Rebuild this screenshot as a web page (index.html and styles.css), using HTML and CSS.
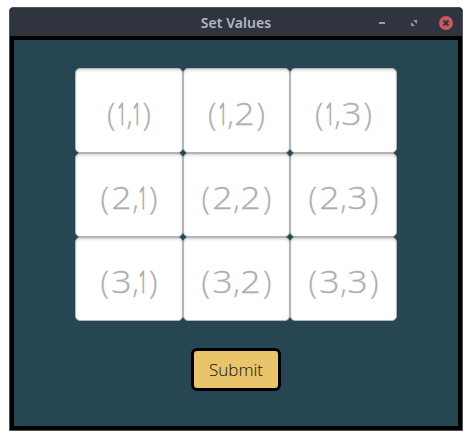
FILE: index.html
```
<!DOCTYPE html>
<html lang="en">
<head>
<meta charset="utf-8">
<title>Set Values</title>
<link rel="stylesheet" href="styles.css">
</head>
<body>
<main class="window">
  <header class="titlebar">
    <h1>Set Values</h1>
    <div class="controls">
      <svg width="80" height="16" viewBox="0 0 80 16">
        <path d="M4 7h6v2H4z" fill="#969aaa"/>
        <path d="M38 5h4v4zM36 7v4h4z" fill="#969aaa"/>
        <circle cx="71" cy="8" r="7" fill="#cc575d"/>
        <path d="M68.5 5.5l5 5m0-5l-5 5" stroke="#2f343f" stroke-width="2"/>
      </svg>
    </div>
  </header>
  <form class="content">
    <div class="grid">
      <div class="cell"><i class="p">(</i><i class="one">1</i><i class="c">,</i><i class="one">1</i><i class="p">)</i></div>
      <div class="cell"><i class="p">(</i><i class="one">1</i><i class="c">,</i><i class="d">2</i><i class="p">)</i></div>
      <div class="cell"><i class="p">(</i><i class="one">1</i><i class="c">,</i><i class="d">3</i><i class="p">)</i></div>
      <div class="cell"><i class="p">(</i><i class="d">2</i><i class="c">,</i><i class="one">1</i><i class="p">)</i></div>
      <div class="cell clipped"><i class="p">(</i><i class="d">2</i><i class="c">,</i><i class="d">2</i><i class="p">)</i></div>
      <div class="cell"><i class="p">(</i><i class="d">2</i><i class="c">,</i><i class="d">3</i><i class="p">)</i></div>
      <div class="cell"><i class="p">(</i><i class="d">3</i><i class="c">,</i><i class="one">1</i><i class="p">)</i></div>
      <div class="cell"><i class="p">(</i><i class="d">3</i><i class="c">,</i><i class="d">2</i><i class="p">)</i></div>
      <div class="cell"><i class="p">(</i><i class="d">3</i><i class="c">,</i><i class="d">3</i><i class="p">)</i></div>
    </div>
    <button class="submit" type="button">Submit</button>
  </form>
</main>
</body>
</html>
```
FILE: styles.css
```
* { box-sizing: border-box; }
body { margin: 0; padding: 7px 9px; background: #fff; }
.window {
  width: 454px;
  height: 424px;
  border: 1px solid #555;
  border-radius: 4px 4px 0 0;
  background: #000;
  overflow: hidden;
}
.titlebar {
  display: grid;
  grid-template-columns: 80px 1fr 80px;
  align-items: center;
  height: 28px;
  background: #2f343f;
}
.titlebar h1 {
  grid-column: 2;
  margin: 0;
  padding-top: 1px;
  text-align: center;
  font: 600 14px/28px "Noto Sans", sans-serif;
  letter-spacing: 0.05px;
  color: #afb8c6;
}
.controls { display: flex; margin-left: -7px; }
.content {
  display: flex;
  flex-direction: column;
  align-items: center;
  height: 394px;
  padding-top: 28px;
  border: 4px solid #000;
  background: #264653;
}
.grid {
  display: grid;
  grid-template-columns: 108px 107px 107px;
  grid-template-rows: 85px 84px 84px;
}
.cell {
  display: flex;
  align-items: center;
  justify-content: center;
  border: 1px solid #b5b5b5;
  border-radius: 5px;
  background: #fff;
  box-shadow: inset 0 2px 3px -1px #ccc;
  color: #aeaeae;
  font: 300 31px/40px "Open Sans", sans-serif;
  -webkit-text-stroke: 0.3px #aeaeae;
  padding-top: 4px;
}
.cell i {
  display: flex;
  justify-content: center;
  flex: none;
  font-style: normal;
}
.p { width: 12.5px; }
.one { width: 8px; transform: scaleX(0.5); -webkit-text-stroke-width: 1.2px; }
.d { width: 21px; transform: scaleX(1.15); }
.c { width: 7px; transform: scaleX(0.9); }
.clipped i:first-child { clip-path: inset(0 0 0 3px); }
.clipped i:last-child { clip-path: inset(0 3px 0 0); }
.submit {
  width: 90px;
  height: 43px;
  margin: 27px 0 0 0;
  padding: 0;
  border: 3px solid #000;
  border-radius: 6px;
  background: #e9c46a;
  color: #222;
  font: 300 17px/37px "Open Sans", sans-serif;
  -webkit-text-stroke: 0.1px #222;
}
```
